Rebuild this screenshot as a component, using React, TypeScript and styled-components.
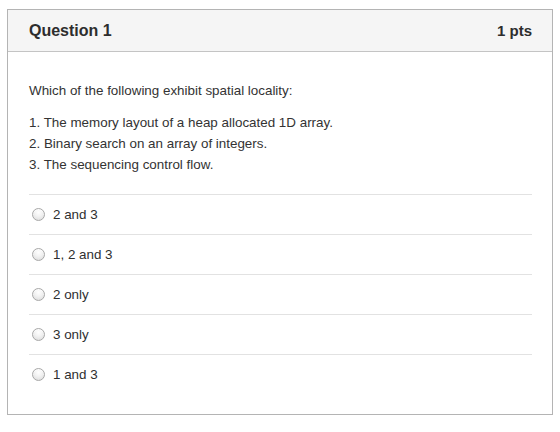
import React from 'react';
import styled, {createGlobalStyle} from 'styled-components';

const GlobalStyle = createGlobalStyle`
  html, body {
    margin: 0;
    padding: 0;
    background: #fff;
  }
  body {
    font-family: "Liberation Sans", Arial, Helvetica, sans-serif;
    color: #333;
  }
`;

const Page = styled.div`
  padding: 9px 7px 0 7px;
  width: 546px;
`;

const Card = styled.div`
  border: 1px solid #b4b4b4;
  background: #fff;
`;

const Header = styled.div`
  display: flex;
  justify-content: space-between;
  align-items: center;
  height: 41px;
  padding: 0 20px 0 21px;
  background: #f5f5f5;
  border-bottom: 1px solid #c4c4c4;
`;

const HeaderText = styled.h2`
  margin: 0;
  font-size: 16px;
  font-weight: 700;
  color: #2d2d2d;
`;

const Points = styled.span`
  font-size: 15px;
  font-weight: 700;
  color: #2d2d2d;
`;

const Body = styled.div`
  padding: 28px 20px 20px 21px;
`;

const Prompt = styled.p`
  margin: 0 0 11px 0;
  font-size: 13.4px;
  line-height: 21px;
  color: #333;
`;

const Statements = styled.div`
  font-size: 13.4px;
  line-height: 21px;
  color: #333;
  padding-bottom: 19px;
`;

const Answers = styled.ul`
  list-style: none;
  margin: 0;
  padding: 0;
`;

const Answer = styled.li`
  display: flex;
  align-items: center;
  gap: 8px;
  height: 39px;
  padding-left: 3px;
  border-top: 1px solid #e2e2e2;
  font-size: 13.4px;
  color: #2f2f2f;
`;

const Radio = styled.span`
  width: 11px;
  height: 11px;
  border-radius: 50%;
  border: 1px solid #a8a8a8;
  background: radial-gradient(circle at 50% 30%, #ffffff 0%, #f1f1f1 45%, #d9d9d9 100%);
  box-shadow: inset 0 1px 1px rgba(255, 255, 255, 0.8);
  flex: 0 0 auto;
`;

const statements = [
  '1. The memory layout of a heap allocated 1D array.',
  '2. Binary search on an array of integers.',
  '3. The sequencing control flow.',
];

const answers = ['2 and 3', '1, 2 and 3', '2 only', '3 only', '1 and 3'];

const App = () => {
  return (
    <Page>
      <GlobalStyle/>
      <Card>
        <Header>
          <HeaderText>Question 1</HeaderText>
          <Points>1 pts</Points>
        </Header>
        <Body>
          <Prompt>Which of the following exhibit spatial locality:</Prompt>
          <Statements>
            {statements.map(s => (
              <div key={s}>{s}</div>
            ))}
          </Statements>
          <Answers>
            {answers.map(a => (
              <Answer key={a}>
                <Radio/>
                {a}
              </Answer>
            ))}
          </Answers>
        </Body>
      </Card>
    </Page>
  );
};

export default App;
